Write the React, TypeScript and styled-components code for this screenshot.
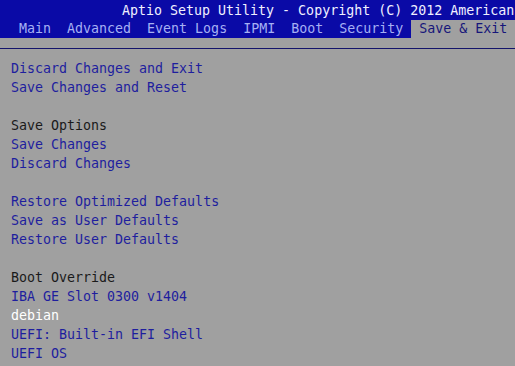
import styled, { createGlobalStyle } from 'styled-components';

/* Styles */
const GlobalStyle = createGlobalStyle`
  html, body {
    margin: 0;
    padding: 0;
    background: #a0a0a0;
  }
`;

const Screen = styled.div`
  width: 515px;
  height: 366px;
  overflow: hidden;
  background: #a0a0a0;
  font-family: 'DejaVu Sans Mono', 'Liberation Mono', monospace;
  font-size: 13.3px;
`;

const Header = styled.div`
  background: #0a0aa6;
  padding-top: 2px;
`;

const Title = styled.div`
  height: 18px;
  line-height: 18px;
  padding-left: 122px;
  color: #f0f0ff;
  white-space: nowrap;
  overflow: hidden;
`;

const TabBar = styled.div`
  display: flex;
  padding-left: 11px;
  height: 18px;
`;

const Tab = styled.div<{ $active?: boolean }>`
  padding: 0 8px;
  line-height: 18px;
  white-space: nowrap;
  color: ${(p) => (p.$active ? '#16167a' : '#a6b0f4')};
  background: ${(p) => (p.$active ? '#a0a0a0' : 'transparent')};
  flex: ${(p) => (p.$active ? 1 : 'none')};
`;

const Panel = styled.div`
  margin-top: 10px;
  border-top: 1px solid #14146a;
  padding: 10px 0 0 11px;
`;

type Kind = 'link' | 'heading' | 'selected' | 'blank';

const Row = styled.div<{ $kind: Kind }>`
  height: 19px;
  line-height: 19px;
  white-space: pre;
  color: ${(p) =>
    p.$kind === 'heading' ? '#1a1a1a' : p.$kind === 'selected' ? '#ffffff' : '#1e1e9e'};
`;

const tabs = ['Main', 'Advanced', 'Event Logs', 'IPMI', 'Boot', 'Security', 'Save & Exit'];

const rows: { text: string; kind: Kind }[] = [
  { text: 'Discard Changes and Exit', kind: 'link' },
  { text: 'Save Changes and Reset', kind: 'link' },
  { text: '', kind: 'blank' },
  { text: 'Save Options', kind: 'heading' },
  { text: 'Save Changes', kind: 'link' },
  { text: 'Discard Changes', kind: 'link' },
  { text: '', kind: 'blank' },
  { text: 'Restore Optimized Defaults', kind: 'link' },
  { text: 'Save as User Defaults', kind: 'link' },
  { text: 'Restore User Defaults', kind: 'link' },
  { text: '', kind: 'blank' },
  { text: 'Boot Override', kind: 'heading' },
  { text: 'IBA GE Slot 0300 v1404', kind: 'link' },
  { text: 'debian', kind: 'selected' },
  { text: 'UEFI: Built-in EFI Shell', kind: 'link' },
  { text: 'UEFI OS', kind: 'link' },
];

function App() {
  return (
    <>
      <GlobalStyle />
      <Screen>
        <Header>
          <Title>Aptio Setup Utility - Copyright (C) 2012 American</Title>
          <TabBar>
            {tabs.map((t) => (
              <Tab key={t} $active={t === 'Save & Exit'}>
                {t}
              </Tab>
            ))}
          </TabBar>
        </Header>
        <Panel>
          {rows.map((r, i) => (
            <Row key={i} $kind={r.kind}>
              {r.text}
            </Row>
          ))}
        </Panel>
      </Screen>
    </>
  );
}

export default App;
